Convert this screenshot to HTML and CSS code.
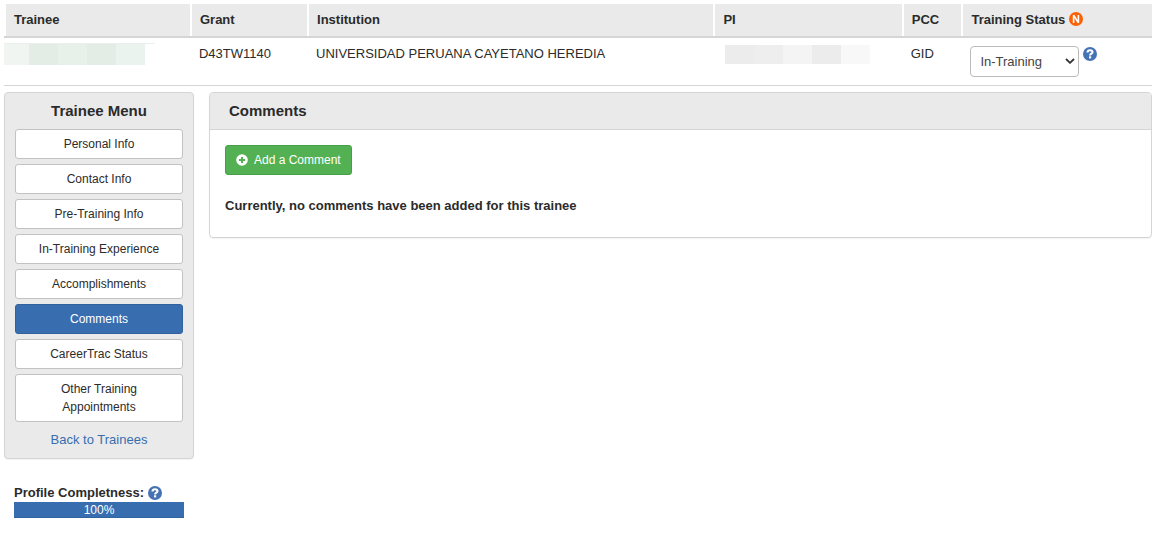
FILE: index.html
```html
<!DOCTYPE html>
<html lang="en">
<head>
  <meta charset="UTF-8" />
  <meta name="viewport" content="width=device-width, initial-scale=1.0" />
  <title>Trainee Comments</title>
  <link rel="stylesheet" href="styles.css">
</head>
<body>
  <!-- TRAINEE SUMMARY -->
  <table class="summary">
    <colgroup>
      <col class="col-trainee">
      <col class="col-grant">
      <col class="col-institution">
      <col class="col-pi">
      <col class="col-pcc">
      <col class="col-status">
    </colgroup>
    <thead>
      <tr>
        <th>Trainee</th>
        <th>Grant</th>
        <th>Institution</th>
        <th>PI</th>
        <th>PCC</th>
        <th>
          <label for="status">Training Status</label>
          <svg class="icon" viewBox="0 0 14 14" aria-hidden="true">
            <circle cx="7" cy="7" r="7" fill="#fc6205" />
            <path d="M4.6 11V3.2L9.4 10.8V3" fill="none" stroke="#fff" stroke-width="1.6" stroke-linejoin="bevel" />
          </svg>
        </th>
      </tr>
    </thead>
    <tbody>
      <tr>
        <td class="trainee-cell">
          <div class="masked masked-green"><i></i><i></i><i></i><i></i><i></i></div>
        </td>
        <td>D43TW1140</td>
        <td>UNIVERSIDAD PERUANA CAYETANO HEREDIA</td>
        <td class="pi-cell">
          <div class="masked masked-gray"><i></i><i></i><i></i><i></i><i></i></div>
        </td>
        <td>GID</td>
        <td class="status-cell">
          <div class="status">
            <div class="select-wrap">
              <select id="status">
                <option>In-Training</option>
              </select>
              <svg class="chevron" viewBox="0 0 10 6" aria-hidden="true">
                <path d="M1 1L5 4.8L9 1" fill="none" stroke="#333" stroke-width="1.8" />
              </svg>
            </div>
            <svg class="icon" viewBox="0 0 14 14" aria-hidden="true">
              <circle cx="7" cy="7" r="7" fill="#4472b4" />
              <path d="M4.5 5.5C4.6 3.9 5.6 3.2 7 3.2C8.5 3.2 9.5 4 9.5 5.2C9.5 6.8 7.1 6.7 7.1 8.5" fill="none" stroke="#fff" stroke-width="2.1" />
              <rect x="6" y="9.3" width="2.2" height="2.1" fill="#fff" />
            </svg>
          </div>
        </td>
      </tr>
    </tbody>
  </table>

  <div class="layout">
    <!-- SIDE MENU -->
    <aside class="sidebar">
      <nav class="menu">
        <h2>Trainee Menu</h2>
        <button type="button" class="btn">Personal Info</button>
        <button type="button" class="btn">Contact Info</button>
        <button type="button" class="btn">Pre-Training Info</button>
        <button type="button" class="btn">In-Training Experience</button>
        <button type="button" class="btn">Accomplishments</button>
        <button type="button" class="btn btn-primary">Comments</button>
        <button type="button" class="btn">CareerTrac Status</button>
        <button type="button" class="btn">Other Training<br>Appointments</button>
        <a class="back" href="#">Back to Trainees</a>
      </nav>

      <div class="profile">
        <div class="profile-label">
          <span>Profile Completness:</span>
          <svg class="icon" viewBox="0 0 14 14" aria-hidden="true">
            <circle cx="7" cy="7" r="7" fill="#4472b4" />
            <path d="M4.5 5.5C4.6 3.9 5.6 3.2 7 3.2C8.5 3.2 9.5 4 9.5 5.2C9.5 6.8 7.1 6.7 7.1 8.5" fill="none" stroke="#fff" stroke-width="2.1" />
            <rect x="6" y="9.3" width="2.2" height="2.1" fill="#fff" />
          </svg>
        </div>
        <div class="progress">
          <div class="progress-bar" style="width: 100%">100%</div>
        </div>
      </div>
    </aside>

    <!-- COMMENTS -->
    <main class="panel">
      <h2 class="panel-heading">Comments</h2>
      <div class="panel-body">
        <button type="button" class="btn btn-success">
          <svg class="plus" viewBox="0 0 12 12" aria-hidden="true">
            <circle cx="6" cy="6" r="5.8" fill="#fff" />
            <path d="M6 2.9V9.1M2.9 6H9.1" stroke="#53b153" stroke-width="2" />
          </svg>
          <span>Add a Comment</span>
        </button>
        <p class="empty">Currently, no comments have been added for this trainee</p>
      </div>
    </main>
  </div>
</body>
</html>
```
FILE: styles.css
```css
* {
  box-sizing: border-box;
}
body {
  margin: 4px 7px 16px 4px;
  font-family: "Liberation Sans", Arial, sans-serif;
  font-size: 13px;
  line-height: 18px;
  color: #2b2b2b;
  background: #fff;
}
h2 {
  margin: 0;
  font-size: 15px;
  line-height: 20px;
}
.icon {
  width: 14px;
  height: 14px;
  flex: none;
  vertical-align: -2px;
}

/* summary table */
.summary {
  width: 100%;
  table-layout: fixed;
  border-collapse: separate;
  border-spacing: 0;
}
.col-trainee {
  width: 16.2%;
}
.col-grant {
  width: 10.2%;
}
.col-institution {
  width: 35.4%;
}
.col-pi {
  width: 16.4%;
}
.col-pcc {
  width: 5.2%;
}
.summary th {
  padding: 7px 8px;
  text-align: left;
  background: #eaeaea;
  background-clip: padding-box;
  border-left: 2px solid #fff;
  box-shadow: 0 2px #d5d5d5;
}
.summary td {
  height: 50px;
  padding: 9px 9px 0;
  vertical-align: top;
  border-bottom: 1px solid #d5d5d5;
}
.summary .trainee-cell {
  padding: 7px 0 0;
}
.summary .pi-cell {
  padding: 9px 12px 0;
}
.summary .status-cell {
  padding-top: 10px;
}
.status {
  display: flex;
  gap: 4px;
}
.status .icon {
  margin-top: 1px;
}
.select-wrap {
  position: relative;
}
.select-wrap select {
  display: block;
  width: 109px;
  height: 31px;
  padding: 0 9px;
  font: inherit;
  color: #444;
  background: #fff;
  border: 1px solid #bbb;
  border-radius: 4px;
  appearance: none;
}
.chevron {
  position: absolute;
  right: 4px;
  top: 12px;
  width: 10px;
  height: 6px;
  pointer-events: none;
}

/* masked names */
.masked {
  display: flex;
}
.masked i {
  width: 29px;
}
.masked-green {
  width: 151px;
  border-top: 1px solid #eaf0ec;
}
.masked-green i {
  height: 21px;
  background: #e8f0ea;
}
.masked-green i:first-child {
  width: 25px;
  background: #f0f5f2;
}
.masked-green i:nth-child(even) {
  background: #e3ede5;
}
.masked-green i:last-child {
  background: #ebf3ee;
}
.masked-gray i {
  height: 19px;
  background: #eee;
}
.masked-gray i:first-child,
.masked-gray i:nth-child(4) {
  background: #ececec;
}
.masked-gray i:nth-child(3) {
  background: #f4f4f4;
}
.masked-gray i:last-child {
  background: #f8f8f8;
}

/* page columns */
.layout {
  display: flex;
  align-items: flex-start;
  gap: 15px;
  margin-top: 6px;
}
.sidebar {
  flex: none;
  width: 190px;
}
.menu {
  display: flex;
  flex-direction: column;
  gap: 5px;
  padding: 8px 10px 9px;
  text-align: center;
  background: #eaeaea;
  border: 1px solid #d5d5d5;
  border-radius: 4px;
  box-shadow: 0 1px 1px rgba(0, 0, 0, 0.05);
}
.menu h2 {
  margin-bottom: 3px;
}
.btn {
  padding: 5px 10px;
  font-family: inherit;
  font-size: 12px;
  line-height: 18px;
  color: #2b2b2b;
  background: #fff;
  border: 1px solid #c2c2c2;
  border-radius: 3px;
  cursor: pointer;
}
.btn-primary {
  color: #fff;
  background: #386eaf;
  border-color: #31629d;
}
.btn-success {
  display: inline-flex;
  align-items: center;
  gap: 6px;
  color: #fff;
  background: #53b153;
  border-color: #46a046;
}
.plus {
  width: 12px;
  height: 12px;
}
.back {
  padding-top: 4px;
  color: #386eaf;
  text-decoration: none;
}
.profile {
  margin: 25px 10px 0;
}
.profile-label {
  display: flex;
  align-items: center;
  gap: 4px;
  font-weight: bold;
}
.progress {
  width: 100%;
  background: #eaeaea;
}
.progress-bar {
  height: 16px;
  font-size: 12px;
  line-height: 16px;
  color: #fff;
  text-align: center;
  background: #386eaf;
  box-shadow: inset 0 -1px #31629d;
}

/* comments panel */
.panel {
  flex: 1;
  border: 1px solid #d5d5d5;
  border-radius: 4px;
  box-shadow: 0 1px 1px rgba(0, 0, 0, 0.05);
}
.panel-heading {
  padding: 8px 19px;
  background: #eaeaea;
  border-bottom: 1px solid #d5d5d5;
  border-radius: 3px 3px 0 0;
}
.panel-body {
  padding: 15px 15px 22px;
}
.empty {
  margin: 22px 0 0;
  font-weight: bold;
}
```
